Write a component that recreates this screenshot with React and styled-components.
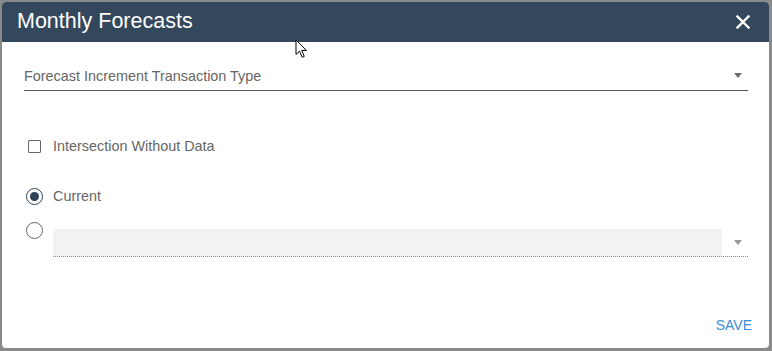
import React from 'react';
import styled, { createGlobalStyle } from 'styled-components';

const GlobalStyle = createGlobalStyle`
  html, body {
    margin: 0;
    padding: 0;
    background: #8a8a8a;
    font-family: "Liberation Sans", Arial, sans-serif;
  }
`;

const Page = styled.div`
  width: 772px;
  height: 351px;
  box-sizing: border-box;
  padding: 2px 3px 3px 2px;
  position: relative;
`;

const Dialog = styled.div`
  height: 100%;
  display: flex;
  flex-direction: column;
  background: #ffffff;
  border-radius: 4px;
  overflow: hidden;
`;

const Header = styled.div`
  height: 40px;
  flex-shrink: 0;
  display: flex;
  align-items: center;
  justify-content: space-between;
  padding: 0 16px 0 15px;
  background: #34485d;
  color: #ffffff;
`;

const Title = styled.h1`
  margin: 0;
  font-size: 21.5px;
  font-weight: 400;
  line-height: 1;
`;

const CloseButton = styled.button`
  display: flex;
  align-items: center;
  justify-content: center;
  width: 20px;
  height: 20px;
  padding: 0;
  border: 0;
  background: transparent;
  cursor: pointer;
`;

const Body = styled.div`
  flex: 1;
  display: flex;
  flex-direction: column;
  padding: 19px 21px 0 22px;
`;

const Select = styled.div`
  height: 29px;
  display: flex;
  align-items: center;
  justify-content: space-between;
  border-bottom: 1px solid #555555;
  color: #666666;
  font-size: 14.4px;
`;

const Caret = styled.span`
  width: 0;
  height: 0;
  margin-right: ${(p) => p.$right || 6}px;
  border-left: 4.5px solid transparent;
  border-right: 4.5px solid transparent;
  border-top: 5px solid ${(p) => p.$color || '#6a6a6a'};
`;

const Row = styled.label`
  display: flex;
  align-items: ${(p) => (p.$top ? 'flex-start' : 'center')};
  margin-top: ${(p) => p.$gap}px;
  min-height: 20px;
  color: #666666;
  font-size: 14.4px;
`;

const Control = styled.span`
  width: 29px;
  flex-shrink: 0;
  display: flex;
  padding-left: ${(p) => p.$offset}px;
  box-sizing: border-box;
`;

const Checkbox = styled.span`
  width: 13px;
  height: 13px;
  box-sizing: border-box;
  border: 1.5px solid #666666;
  border-radius: 1px;
`;

const Radio = styled.span`
  width: 17px;
  height: 17px;
  box-sizing: border-box;
  border-radius: 50%;
  border: 1.8px solid ${(p) => (p.$checked ? '#2f4258' : '#666666')};
  display: flex;
  align-items: center;
  justify-content: center;

  &::after {
    content: "";
    display: ${(p) => (p.$checked ? 'block' : 'none')};
    width: 9px;
    height: 9px;
    border-radius: 50%;
    background: #2f4258;
  }
`;

const DisabledField = styled.div`
  flex: 1;
  display: flex;
  align-items: center;
  margin-top: 7px;
  border-bottom: 1px dotted #888888;
`;

const DisabledInput = styled.div`
  flex: 1;
  height: 27px;
  background: #f2f2f2;
`;

const CaretBox = styled.div`
  width: 26px;
  display: flex;
  justify-content: flex-end;
`;

const Footer = styled.div`
  display: flex;
  justify-content: flex-end;
  padding: 0 17px 15px 0;
`;

const SaveButton = styled.button`
  padding: 0;
  border: 0;
  background: transparent;
  color: #3a8fd9;
  font-family: "Liberation Sans", Arial, sans-serif;
  font-size: 14px;
  line-height: 16px;
  cursor: pointer;
`;

const Pointer = styled.svg`
  position: absolute;
  left: 295px;
  top: 39px;
`;

export default function App() {
  return (
    <>
      <GlobalStyle />
      <Page>
        <Dialog>
          <Header>
            <Title>Monthly Forecasts</Title>
            <CloseButton aria-label="close">
              <svg width="14" height="14" viewBox="0 0 14 14">
                <path d="M1.5 1.5 L12.5 12.5 M12.5 1.5 L1.5 12.5" stroke="#ffffff" strokeWidth="2.4" strokeLinecap="square" />
              </svg>
            </CloseButton>
          </Header>
          <Body>
            <Select>
              <span>Forecast Increment Transaction Type</span>
              <Caret />
            </Select>
            <Row $gap={45}>
              <Control $offset={4}>
                <Checkbox />
              </Control>
              Intersection Without Data
            </Row>
            <Row $gap={30}>
              <Control $offset={2}>
                <Radio $checked />
              </Control>
              Current
            </Row>
            <Row $gap={16} $top>
              <Control $offset={2}>
                <Radio />
              </Control>
              <DisabledField>
                <DisabledInput />
                <CaretBox>
                  <Caret $color="#9a9a9a" />
                </CaretBox>
              </DisabledField>
            </Row>
          </Body>
          <Footer>
            <SaveButton>SAVE</SaveButton>
          </Footer>
        </Dialog>
        <Pointer width="13" height="20" viewBox="0 0 13 20">
          <path d="M1 1 L1 15.5 L4.5 12.2 L7.2 18.3 L9.3 17.4 L6.7 11.4 L11.5 11.4 Z" fill="#ffffff" stroke="#000000" strokeWidth="1" strokeLinejoin="round" />
        </Pointer>
      </Page>
    </>
  );
}
